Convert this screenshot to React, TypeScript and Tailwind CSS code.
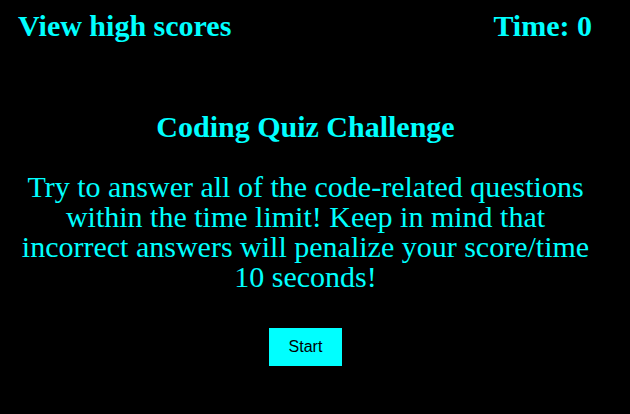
export default function App() {
  return (
    <div className="min-h-[414px] w-full bg-black text-[#00ffff] font-['Liberation_Serif',_'Times_New_Roman',_serif]">
      <header className="flex justify-between items-center pl-[18px] pr-[38px] pt-[11px]">
        <a className="text-[30px] font-bold leading-[30px] cursor-pointer">View high scores</a>
        <span className="text-[30px] font-bold leading-[30px]">Time: 0</span>
      </header>
      <main className="flex flex-col items-center pr-[19px] pt-[71px]">
        <h1 className="text-[30px] font-bold leading-[30px]">Coding Quiz Challenge</h1>
        <p className="mt-[30px] max-w-[580px] text-center text-[30px] leading-[30px]">
          Try to answer all of the code-related questions within the time limit! Keep in mind that incorrect answers will penalize your score/time 10 seconds!
        </p>
        <button className="mt-[36px] w-[73px] h-[38px] bg-[#00ffff] text-black text-[16px] font-['Liberation_Sans',_Arial,_sans-serif]">
          Start
        </button>
      </main>
    </div>
  );
}
